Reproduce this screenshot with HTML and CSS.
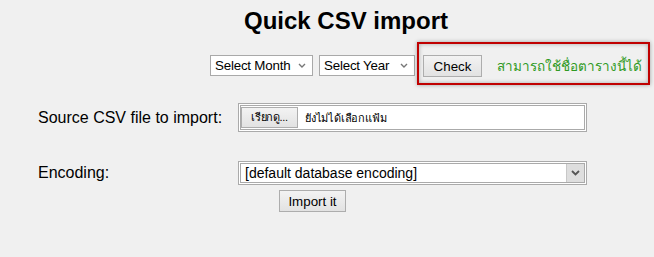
FILE: index.html
```html
<!DOCTYPE html>
<html lang="th">
<head>
    <meta charset="UTF-8">
    <meta name="viewport" content="width=device-width, initial-scale=1.0">
    <title>Quick CSV import</title>
    <link rel="stylesheet" href="styles.css">
</head>
<body>
    <div class="page">
        <h1 class="title">Quick CSV import</h1>

        <div class="check-row">
            <div class="select small month">
                <span>Select Month</span>
                <svg class="chev" width="8" height="5" viewBox="0 0 8 5"><path d="M1 1 L4 4 L7 1" fill="none" stroke="#777" stroke-width="1.4"/></svg>
            </div>
            <div class="select small year">
                <span>Select Year</span>
                <svg class="chev" width="8" height="5" viewBox="0 0 8 5"><path d="M1 1 L4 4 L7 1" fill="none" stroke="#777" stroke-width="1.4"/></svg>
            </div>
            <div class="highlight">
                <button class="btn check">Check</button>
                <span class="status">สามารถใช้ชื่อตารางนี้ได้</span>
            </div>
        </div>

        <div class="form">
            <label class="label">Source CSV file to import:</label>
            <div class="field file">
                <button class="btn browse">เรียกดู...</button>
                <span class="file-name">ยังไม่ได้เลือกแฟ้ม</span>
            </div>

            <label class="label enc-label">Encoding:</label>
            <div class="enc-cell">
                <div class="field encoding">
                    <span>[default database encoding]</span>
                    <span class="drop">
                        <svg width="9" height="6" viewBox="0 0 9 6"><path d="M1 1 L4.5 4.5 L8 1" fill="none" stroke="#555" stroke-width="1.8"/></svg>
                    </span>
                </div>
                <button class="btn import">Import it</button>
            </div>
        </div>
    </div>
</body>
</html>
```

FILE: styles.css
```css
body {
    margin: 0;
    background: #f0f0f0;
    font-family: "Liberation Sans", Arial, sans-serif;
    color: #000;
}

.page {
    padding-left: 38px;
}

.title {
    margin: 0;
    padding-top: 6px;
    font-size: 24px;
    line-height: 30px;
    font-weight: bold;
    text-align: center;
}

.check-row {
    display: flex;
    align-items: flex-start;
    margin-top: 6px;
    padding-left: 172px;
}

.select {
    display: flex;
    flex-shrink: 0;
    align-items: center;
    justify-content: space-between;
    box-sizing: border-box;
    height: 21px;
    margin-top: 13px;
    padding: 0 6px 0 4px;
    background: #fff;
    border: 1px solid #a9a9a9;
    font-size: 13.33px;
    letter-spacing: -0.2px;
    white-space: nowrap;
}

.month {
    width: 103px;
}

.year {
    width: 96px;
    margin-left: 6px;
}

.highlight {
    display: flex;
    flex-shrink: 0;
    align-items: center;
    margin-left: 2px;
    padding: 11px 6px 6px 4px;
    border: 2px solid #c00000;
    box-shadow: 0 0 4px rgba(0, 0, 0, 0.35), inset 0 0 4px rgba(0, 0, 0, 0.3);
}

.btn {
    box-sizing: border-box;
    height: 22px;
    padding: 0;
    background: linear-gradient(#f3f3f3, #e2e2e2);
    border: 1px solid #adadad;
    font-family: "Liberation Sans", Arial, sans-serif;
    font-size: 13.33px;
    color: #000;
}

.check {
    width: 59px;
}

.status {
    margin-left: 15px;
    font-size: 13.5px;
    color: #2f9a23;
    white-space: nowrap;
}

.form {
    display: grid;
    grid-template-columns: 200px 349px;
    align-items: center;
    margin-top: 18px;
}

.label {
    font-size: 16px;
}

.field {
    box-sizing: border-box;
    display: flex;
    align-items: center;
    background: #fff;
    border: 3px double #aaa;
}

.file {
    height: 29px;
}

.browse {
    width: 57px;
    height: 21px;
    margin-top: -1px;
    font-size: 11px;
    letter-spacing: -0.3px;
}

.file-name {
    margin-left: 7px;
    font-size: 11px;
    letter-spacing: -0.2px;
}

.enc-label {
    align-self: start;
    margin-top: 29px;
    line-height: 24px;
}

.enc-cell {
    margin-top: 29px;
}

.encoding {
    justify-content: space-between;
    height: 24px;
    padding-left: 4px;
    font-size: 14px;
}

.drop {
    display: flex;
    align-items: center;
    justify-content: center;
    width: 17px;
    height: 18px;
    background: #dedede;
    border-left: 1px solid #c8c8c8;
}

.import {
    display: block;
    width: 67px;
    margin: 5px 0 0 41px;
}
```
